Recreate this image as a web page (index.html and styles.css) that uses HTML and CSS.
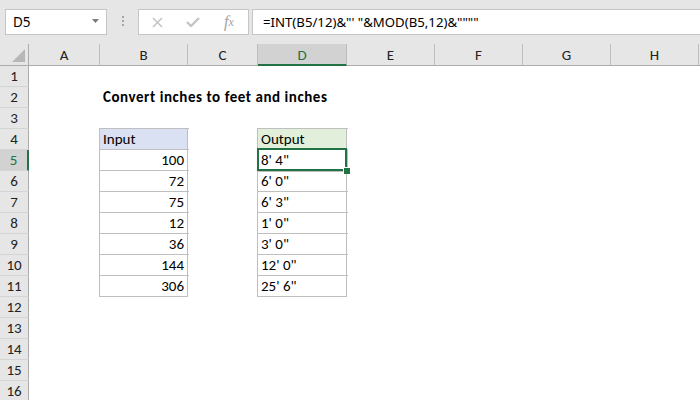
FILE: index.html
```html
<!DOCTYPE html>
<html>
<head>
<meta charset="utf-8">
<link rel="stylesheet" href="styles.css">
</head>
<body>
<div class="toolbar">
  <div class="namebox"><span>D5</span><svg class="caret" width="7" height="4" viewBox="0 0 7 4"><path d="M0 0H7L3.5 4Z" fill="#7b7b7b"/></svg></div>
  <div class="grip"><i></i><i></i><i></i></div>
  <div class="fxbox">
    <span class="slot"><svg width="11" height="11" viewBox="0 0 11 11"><path d="M1 1L10 10M10 1L1 10" stroke="#c5c5c5" stroke-width="1.6" fill="none"/></svg></span>
    <span class="slot"><svg width="14" height="10" viewBox="0 0 14 10"><path d="M1 5L5 9L13 1" stroke="#c5c5c5" stroke-width="2.4" fill="none"/></svg></span>
    <span class="slot fx">f<span class="fxx">x</span></span>
  </div>
  <div class="formula">=INT(B5/12)&amp;"' "&amp;MOD(B5,12)&amp;""""</div>
</div>
<div class="sheet">
  <div class="corner"><svg width="29" height="21" viewBox="0 0 29 21"><path d="M12 18H25V5Z" fill="#b7b7b7"/></svg></div>
  <div class="ch">A</div><div class="ch">B</div><div class="ch">C</div><div class="ch sel">D</div><div class="ch">E</div><div class="ch">F</div><div class="ch">G</div><div class="ch">H</div><div class="ch"></div>

  <div class="rh">1</div><div class="c"></div><div class="c"></div><div class="c"></div><div class="c"></div><div class="c"></div><div class="c"></div><div class="c"></div><div class="c"></div><div class="c"></div>

  <div class="rh">2</div><div class="c"></div><div class="c title">Convert inches to feet and inches</div><div class="c"></div><div class="c"></div><div class="c"></div><div class="c"></div><div class="c"></div>

  <div class="rh">3</div><div class="c"></div><div class="c"></div><div class="c"></div><div class="c"></div><div class="c"></div><div class="c"></div><div class="c"></div><div class="c"></div><div class="c"></div>

  <div class="rh">4</div><div class="c"></div><div class="c t hin">Input</div><div class="c"></div><div class="c t hout">Output</div><div class="c"></div><div class="c"></div><div class="c"></div><div class="c"></div><div class="c"></div>

  <div class="rh sel">5</div><div class="c"></div><div class="c t num">100</div><div class="c"></div><div class="c t active">8' 4"<span class="selbox"><span class="handle"></span></span></div><div class="c"></div><div class="c"></div><div class="c"></div><div class="c"></div><div class="c"></div>

  <div class="rh">6</div><div class="c"></div><div class="c t num">72</div><div class="c"></div><div class="c t">6' 0"</div><div class="c"></div><div class="c"></div><div class="c"></div><div class="c"></div><div class="c"></div>

  <div class="rh">7</div><div class="c"></div><div class="c t num">75</div><div class="c"></div><div class="c t">6' 3"</div><div class="c"></div><div class="c"></div><div class="c"></div><div class="c"></div><div class="c"></div>

  <div class="rh">8</div><div class="c"></div><div class="c t num">12</div><div class="c"></div><div class="c t">1' 0"</div><div class="c"></div><div class="c"></div><div class="c"></div><div class="c"></div><div class="c"></div>

  <div class="rh">9</div><div class="c"></div><div class="c t num">36</div><div class="c"></div><div class="c t">3' 0"</div><div class="c"></div><div class="c"></div><div class="c"></div><div class="c"></div><div class="c"></div>

  <div class="rh">10</div><div class="c"></div><div class="c t num">144</div><div class="c"></div><div class="c t">12' 0"</div><div class="c"></div><div class="c"></div><div class="c"></div><div class="c"></div><div class="c"></div>

  <div class="rh">11</div><div class="c"></div><div class="c t num">306</div><div class="c"></div><div class="c t">25' 6"</div><div class="c"></div><div class="c"></div><div class="c"></div><div class="c"></div><div class="c"></div>

  <div class="rh">12</div><div class="c"></div><div class="c"></div><div class="c"></div><div class="c"></div><div class="c"></div><div class="c"></div><div class="c"></div><div class="c"></div><div class="c"></div>

  <div class="rh">13</div><div class="c"></div><div class="c"></div><div class="c"></div><div class="c"></div><div class="c"></div><div class="c"></div><div class="c"></div><div class="c"></div><div class="c"></div>

  <div class="rh">14</div><div class="c"></div><div class="c"></div><div class="c"></div><div class="c"></div><div class="c"></div><div class="c"></div><div class="c"></div><div class="c"></div><div class="c"></div>

  <div class="rh">15</div><div class="c"></div><div class="c"></div><div class="c"></div><div class="c"></div><div class="c"></div><div class="c"></div><div class="c"></div><div class="c"></div><div class="c"></div>

  <div class="rh">16</div><div class="c"></div><div class="c"></div><div class="c"></div><div class="c"></div><div class="c"></div><div class="c"></div><div class="c"></div><div class="c"></div><div class="c"></div>
</div>
</body>
</html>
```

FILE: styles.css
```css
* { box-sizing: border-box; }
html, body { margin: 0; padding: 0; }
body {
  width: 700px;
  height: 400px;
  overflow: hidden;
  background: #fff;
  font-family: Carlito, Calibri, Lato, sans-serif;
  color: #000;
}

/* ---------- formula bar ---------- */
.toolbar {
  height: 44px;
  background: #e6e6e6;
  display: flex;
  align-items: flex-start;
  padding: 9px 0 0 5px;
  overflow: hidden;
}
.namebox {
  flex: none;
  width: 102px;
  height: 26px;
  background: #fff;
  border: 1px solid #c6c6c6;
  display: flex;
  align-items: center;
  justify-content: space-between;
  padding: 0 7px 0 7px;
  font-family: "Noto Sans", sans-serif;
  font-size: 13.5px;
  color: #000;
}
.caret { margin-top: -3px; }
.grip {
  flex: none;
  margin: 7px 0 0 15px;
  display: flex;
  flex-direction: column;
  gap: 2px;
}
.grip i {
  display: block;
  width: 2px;
  height: 2px;
  background: #a5a5a5;
}
.fxbox {
  flex: none;
  margin-left: 14px;
  width: 111px;
  height: 26px;
  background: #fff;
  border: 1px solid #c6c6c6;
  display: flex;
  align-items: center;
}
.slot {
  width: 36px;
  height: 24px;
  display: flex;
  align-items: center;
  justify-content: center;
}
.fx {
  font-family: "Liberation Serif", serif;
  font-style: italic;
  font-size: 16px;
  color: #a3a3a3;
}
.fxx { font-size: 12px; }
.formula {
  flex: none;
  margin-left: 3px;
  width: 460px;
  height: 26px;
  background: #fff;
  border: 1px solid #c6c6c6;
  border-right: none;
  padding-left: 10px;
  font-family: "Noto Sans", sans-serif;
  font-size: 13.2px;
  line-height: 24px;
  white-space: nowrap;
}

/* ---------- grid ---------- */
.sheet {
  display: grid;
  grid-template-columns: 29px 71px 88px 70px 89px 88px 88px 88px 88px 20px;
  grid-template-rows: 22px;
  grid-auto-rows: 21px;
  font-size: 15px;
}
.corner {
  background: #e6e6e6;
  border-right: 1px solid #ababab;
  border-bottom: 1px solid #ababab;
}
.corner svg { display: block; }
.ch {
  background: #e6e6e6;
  border-right: 1px solid #bdbdbd;
  border-bottom: 1px solid #ababab;
  text-align: center;
  line-height: 20px;
  padding-top: 1px;
  color: #222;
}
.ch.sel {
  background: #d2d2d2;
  color: #217346;
  border-bottom: 2px solid #217346;
}
.rh {
  background: #e6e6e6;
  border-right: 1px solid #ababab;
  border-bottom: 1px solid #d4d4d4;
  text-align: center;
  line-height: 20px;
  color: #222;
}
.rh.sel {
  background: #d2d2d2;
  color: #217346;
  border-right: 2px solid #217346;
}
.c {
  background: #fff;
  line-height: 20px;
  padding: 0 3px;
  white-space: nowrap;
}
.title {
  grid-column: span 3;
  font-weight: bold;
  letter-spacing: 0.55px;
}
.t {
  border-right: 1px solid #bfbfbf;
  border-bottom: 1px solid #bfbfbf;
  box-shadow: 0 0 0 1px #bfbfbf;
}
.num { text-align: right; }
.hin { background: #d9e1f2; }
.hout { background: #e2efda; }
.active { position: relative; }
.selbox {
  position: absolute;
  top: -2px;
  left: -1px;
  right: -1px;
  bottom: -1px;
  border: 2px solid #217346;
}
.handle {
  position: absolute;
  right: -5px;
  bottom: -5px;
  width: 7px;
  height: 7px;
  background: #217346;
  border-left: 1px solid #fff;
  border-top: 1px solid #fff;
}
```
